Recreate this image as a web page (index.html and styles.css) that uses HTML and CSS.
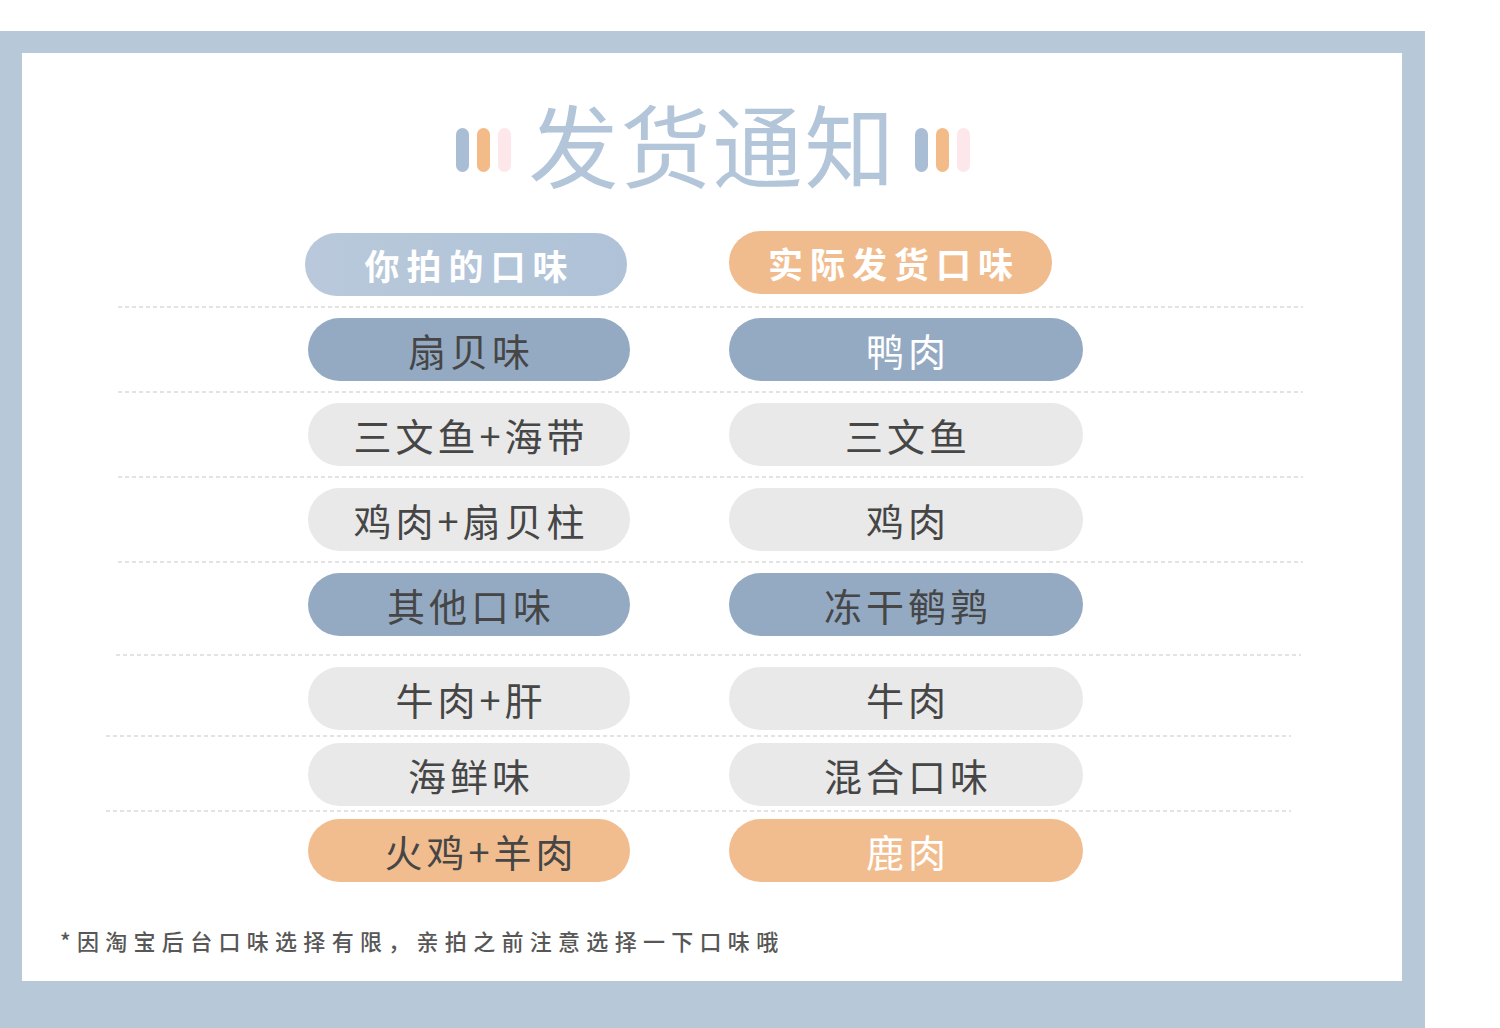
FILE: index.html
```html
<!DOCTYPE html>
<html lang="zh-CN">
<head>
<meta charset="utf-8">
<title>发货通知</title>
<link rel="stylesheet" href="styles.css">
</head>
<body>
<div class="frame">
  <div class="card">
    <div class="title">
      <div class="bars"><span class="bar blue"></span><span class="bar orange"></span><span class="bar pink"></span></div>
      <h1>发货通知</h1>
      <div class="bars"><span class="bar blue"></span><span class="bar orange"></span><span class="bar pink"></span></div>
    </div>

    <div class="table">
      <div class="row">
        <div class="pill head-left">你拍的口味</div>
        <div class="pill head-right">实际发货口味</div>
      </div>
      <div class="sep"></div>
      <div class="row">
        <div class="pill left navy">扇贝味</div>
        <div class="pill right navy light-text">鸭肉</div>
      </div>
      <div class="sep"></div>
      <div class="row">
        <div class="pill left gray">三文鱼+海带</div>
        <div class="pill right gray">三文鱼</div>
      </div>
      <div class="sep"></div>
      <div class="row">
        <div class="pill left gray">鸡肉+扇贝柱</div>
        <div class="pill right gray">鸡肉</div>
      </div>
      <div class="sep"></div>
      <div class="row">
        <div class="pill left navy">其他口味</div>
        <div class="pill right navy">冻干鹌鹑</div>
      </div>
      <div class="sep sep-wide"></div>
      <div class="row">
        <div class="pill left gray">牛肉+肝</div>
        <div class="pill right gray">牛肉</div>
      </div>
      <div class="sep sep-tight"></div>
      <div class="row">
        <div class="pill left gray">海鲜味</div>
        <div class="pill right gray">混合口味</div>
      </div>
      <div class="sep sep-tighter"></div>
      <div class="row">
        <div class="pill left orange-pill shift">火鸡+羊肉</div>
        <div class="pill right orange-pill light-text">鹿肉</div>
      </div>
    </div>

    <p class="note">*因淘宝后台口味选择有限，亲拍之前注意选择一下口味哦</p>
  </div>
</div>
</body>
</html>
```

FILE: styles.css
```css
* { box-sizing: border-box; }

html, body {
  margin: 0;
  padding: 0;
  background: #ffffff;
  font-family: "Noto Sans CJK SC", "Noto Sans", sans-serif;
}

body {
  width: 1500px;
  height: 1028px;
  overflow: hidden;
}

.frame {
  margin-top: 31px;
  width: 1425px;
  height: 997px;
  background: #b7c8d8;
  padding: 22px 23px 0 22px;
}

.card {
  background: #ffffff;
  height: 928px;
  display: flex;
  flex-direction: column;
}

.title {
  display: flex;
  justify-content: center;
  align-items: center;
  gap: 18px;
  padding-top: 41px;
  margin-left: 1px;
}

.title h1 {
  margin: 0;
  font-size: 90px;
  font-weight: 400;
  line-height: 96px;
  letter-spacing: 2px;
  color: #b3c5d9;
}

.bars {
  display: flex;
  gap: 8px;
  margin-top: 16px;
}

.bar {
  display: block;
  width: 13px;
  height: 44px;
  border-radius: 7px;
}
.bar.blue { background: #a9bed4; }
.bar.orange { background: #f2bb88; }
.bar.pink { background: #fde7ea; }

.table {
  margin-top: 43px;
  display: flex;
  flex-direction: column;
}

.row {
  display: flex;
  gap: 99px;
  padding-left: 286px;
}

.pill {
  height: 63px;
  border-radius: 32px;
  display: flex;
  align-items: center;
  justify-content: center;
  font-size: 38px;
  font-weight: 400;
  letter-spacing: 4px;
  padding-left: 4px;
  color: #464646;
  line-height: 1;
}

.pill.left { width: 322px; }
.pill.right { width: 354px; }
.pill.shift { padding-left: 24px; }

.head-left {
  width: 322px;
  background: linear-gradient(90deg, #b9c9db, #afc2d7);
  color: #ffffff;
  font-size: 35px;
  font-weight: 700;
  letter-spacing: 7px;
  padding-left: 7px;
  margin-left: -3px;
  margin-right: 3px;
}

.head-right {
  width: 323px;
  background: #f1bc8d;
  color: #ffffff;
  font-size: 35px;
  font-weight: 700;
  letter-spacing: 7px;
  padding-left: 7px;
  margin-top: -2px;
}

.navy { background: #94aac3; }
.gray { background: #e9e9e9; }
.orange-pill { background: #f1bd8f; }
.light-text { color: #ffffff; }

.sep {
  margin: 10px 0 10px 96px;
  width: 1185px;
  height: 2px;
  background: repeating-linear-gradient(90deg, #e3e3e3 0 4px, transparent 4px 7px);
}
.sep-wide { margin-top: 18px; margin-bottom: 11px; margin-left: 94px; }
.sep-tight { margin: 5px 0 6px 84px; }
.sep-tighter { margin: 4px 0 7px 84px; }

.note {
  margin: 46px 0 0 38px;
  font-size: 22px;
  font-weight: 500;
  letter-spacing: 6.3px;
  color: #575757;
  line-height: 24px;
}
```
